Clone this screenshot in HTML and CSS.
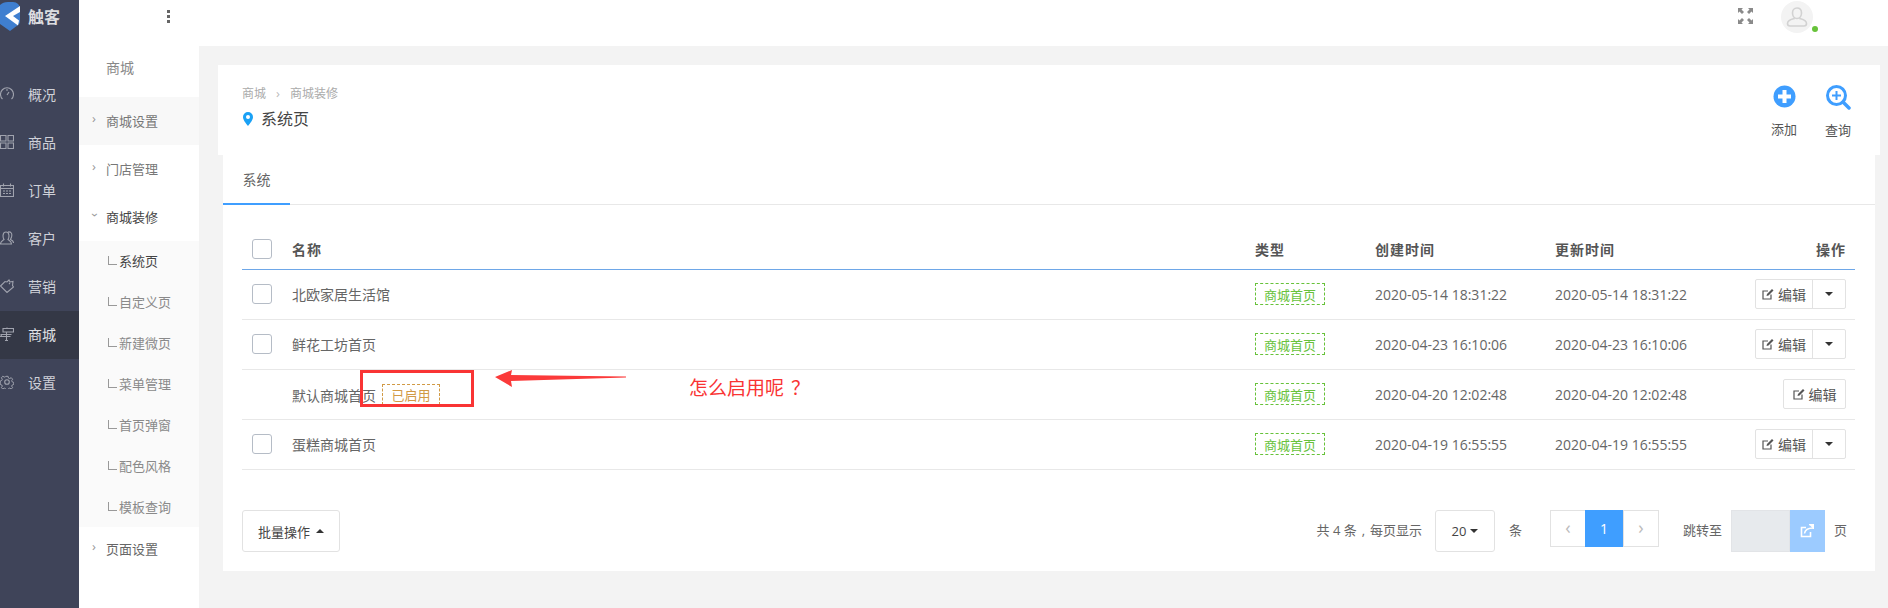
FILE: index.html
```html
<!DOCTYPE html>
<html lang="zh-CN">
<head>
<meta charset="utf-8">
<title>系统页</title>
<link rel="stylesheet" href="styles.css">
</head>
<body>
<div class="app">
  <aside class="rail">
    <div class="logo">
      <svg class="logo-mark" width="20" height="30" viewBox="0 0 20 30"><path d="M0 4Q3 1 8 1h5c4 0 7 3 7 7v12c0 2-1 3-2 4l-8 6-10-7z" fill="#3f7fd0"/><path d="M20 5v6l-7 4 6 4.500-1 5L5 15z" fill="#fff"/></svg>
      <span class="logo-text">触客</span>
    </div>
    <nav class="rail-nav">
      <a class="rail-item"><svg class="ri" viewBox="0 0 14 14"><path d="M2.500 12A6.500 6.500 0 1 1 11.500 12M7 8l2-3M6 3h2"/></svg>概况</a>
      <a class="rail-item"><svg class="ri" viewBox="0 0 14 14"><path d="M.5.5h5.500v5.500H.5zM8 .5h5.500v5.500H8zM.5 8h5.500v5.500H.5zM8 8h5.500v5.500H8z"/></svg>商品</a>
      <a class="rail-item"><svg class="ri" viewBox="0 0 14 14"><path d="M.5 2.500h13v11H.5zM.5 5.500h13M3.500 .5v3M10.500 .5v3M3 8h2M6 8h2M9 8h2M3 10.500h2M6 10.500h2M9 10.500h2"/></svg>订单</a>
      <a class="rail-item"><svg class="ri" viewBox="0 0 14 14"><path d="M.5 13c0-3 2.500-3.500 3.500-4.500C2.500 6 2.500 1 6 1s3.500 5 2 7.500c1 1 3.500 1.500 3.500 4.500zM8 1c3-.5 4.500 1.500 3.500 5l-1 2.500c1 .5 3 1 3 3.500"/></svg>客户</a>
      <a class="rail-item"><svg class="ri" viewBox="0 0 14 14"><path d="M.5 7L5 2.500l2 .5 2-2 1 2 3-.5-.5 4L13.500 8 7 13.500zM9 5l1-1"/></svg>营销</a>
      <a class="rail-item is-active"><svg class="ri" viewBox="0 0 14 14"><path d="M3 1.500h10.500v3.500H3zM.5 7.500h11M2 7.500l-1.500 2h10M7 .5v1M6.500 5v8.500M5 13.500h3"/></svg>商城</a>
      <a class="rail-item"><svg class="ri" viewBox="0 0 14 14"><circle cx="7" cy="7" r="2.300"/><path d="M5.800.7h2.400l.4 1.900 1.400.6 1.700-1 1.500 1.700-1 1.700.6 1.300 1.700.6v2.200l-1.700.6-.6 1.300 1 1.700-1.500 1.500-1.700-1-1.400.6-.4 1.900H5.800l-.4-1.900-1.400-.6-1.700 1-1.500-1.500 1-1.700-.6-1.300-1.700-.6V5.900l1.700-.6.600-1.300-1-1.700L2.300 .6l1.700 1 1.400-.6z" transform="translate(.7 .7) scale(.9)"/></svg>设置</a>
    </nav>
  </aside>

  <aside class="side">
    <div class="side-title">商城</div>
    <a class="side-item is-hover"><span class="chev">›</span>商城设置</a>
    <a class="side-item"><span class="chev">›</span>门店管理</a>
    <a class="side-item is-open"><span class="chev chev-down">›</span>商城装修</a>
    <div class="side-sub">
      <a class="sub-item is-current">系统页</a>
      <a class="sub-item">自定义页</a>
      <a class="sub-item">新建微页</a>
      <a class="sub-item">菜单管理</a>
      <a class="sub-item">首页弹窗</a>
      <a class="sub-item">配色风格</a>
      <a class="sub-item">模板查询</a>
    </div>
    <a class="side-item is-dark"><span class="chev">›</span>页面设置</a>
  </aside>

  <div class="main">
    <header class="topbar">
      <span class="dots"><i></i><i></i><i></i></span>
      <svg class="expand" width="15" height="16" viewBox="0 0 15 16"><path d="M0 0h5L3.500 1.500 6 4 4 6 1.500 3.500 0 5zM15 0h-5l1.500 1.500L9 4l2 2 2.500-2.500L15 5zM0 16h5l-1.500-1.500L6 12l-2-2-2.500 2.500L0 11zM15 16h-5l1.500-1.500L9 12l2-2 2.500 2.500L15 11z" fill="#8a8a8a"/></svg>
      <span class="avatar">
        <svg width="22" height="22" viewBox="0 0 22 22" fill="none" stroke="#d2d2d2" stroke-width="1.600"><path d="M11 2c3 0 4.500 2.200 4.500 5s-1.500 5.500-4.500 5.500S6.500 9.800 6.500 7 8 2 11 2zM8.500 12.500C5 13.500 1.500 14 1.500 17.500c0 1.500.8 2.500 2.500 2.500h14c1.700 0 2.500-1 2.500-2.500 0-3.500-3.500-4-7-5"/></svg>
        <i class="online"></i>
      </span>
    </header>

    <div class="content">
      <section class="page-head">
        <div class="head-left">
          <div class="crumbs"><span>商城</span><span class="crumb-sep">›</span><span>商城装修</span></div>
          <h1 class="page-title">
            <svg width="10" height="14" viewBox="0 0 10 14"><path d="M5 0a5 5 0 0 1 5 5c0 3-3 6.500-5 9-2-2.500-5-6-5-9a5 5 0 0 1 5-5z" fill="#1aa1f5"/><circle cx="5" cy="5" r="2" fill="#fff"/></svg>
            系统页
          </h1>
        </div>
        <div class="head-actions">
          <a class="action">
            <svg width="23" height="23" viewBox="0 0 23 23"><circle cx="11.500" cy="11.500" r="11" fill="#3f9eff"/><path d="M9.500 5h4v4.500H18v4h-4.500V18h-4v-4.500H5v-4h4.500z" fill="#fff"/></svg>
            <span>添加</span>
          </a>
          <a class="action">
            <svg width="25" height="25" viewBox="0 0 25 25" fill="none" stroke="#3f9eff"><circle cx="10.500" cy="10.500" r="9" stroke-width="3"/><path d="M17 17l6 6" stroke-width="3.500" stroke-linecap="round"/><path d="M10.500 6v9M6 10.500h9" stroke-width="2"/></svg>
            <span>查询</span>
          </a>
        </div>
      </section>

      <section class="panel">
        <div class="tabs"><a class="tab is-active">系统</a></div>
        <div class="table-wrap">
          <div class="row row-head">
            <div class="cell-check"><span class="checkbox"></span></div>
            <div>名称</div>
            <div>类型</div>
            <div>创建时间</div>
            <div>更新时间</div>
            <div class="cell-ops">操作</div>
          </div>

          <div class="row">
            <div class="cell-check"><span class="checkbox"></span></div>
            <div>北欧家居生活馆</div>
            <div><span class="tag tag-green">商城首页</span></div>
            <div>2020-05-14 18:31:22</div>
            <div>2020-05-14 18:31:22</div>
            <div class="cell-ops"><span class="btn-group"><a class="btn-edit"><svg class="edit-ico" viewBox="0 0 12 12"><path d="M9 6.500V11H1V3h5" fill="none" stroke="#555" stroke-width="1.200"/><path d="M4.500 8l.5-2 5-5 1.500 1.500-5 5z" fill="#555"/></svg>编辑</a><a class="btn-caret"><i class="caret"></i></a></span></div>
          </div>

          <div class="row">
            <div class="cell-check"><span class="checkbox"></span></div>
            <div>鲜花工坊首页</div>
            <div><span class="tag tag-green">商城首页</span></div>
            <div>2020-04-23 16:10:06</div>
            <div>2020-04-23 16:10:06</div>
            <div class="cell-ops"><span class="btn-group"><a class="btn-edit"><svg class="edit-ico" viewBox="0 0 12 12"><path d="M9 6.500V11H1V3h5" fill="none" stroke="#555" stroke-width="1.200"/><path d="M4.500 8l.5-2 5-5 1.500 1.500-5 5z" fill="#555"/></svg>编辑</a><a class="btn-caret"><i class="caret"></i></a></span></div>
          </div>

          <div class="row">
            <div class="cell-check"></div>
            <div>默认商城首页<span class="tag tag-orange">已启用</span></div>
            <div><span class="tag tag-green">商城首页</span></div>
            <div>2020-04-20 12:02:48</div>
            <div>2020-04-20 12:02:48</div>
            <div class="cell-ops"><span class="btn-group"><a class="btn-edit btn-solo"><svg class="edit-ico" viewBox="0 0 12 12"><path d="M9 6.500V11H1V3h5" fill="none" stroke="#555" stroke-width="1.200"/><path d="M4.500 8l.5-2 5-5 1.500 1.500-5 5z" fill="#555"/></svg>编辑</a></span></div>
          </div>

          <div class="row">
            <div class="cell-check"><span class="checkbox"></span></div>
            <div>蛋糕商城首页</div>
            <div><span class="tag tag-green">商城首页</span></div>
            <div>2020-04-19 16:55:55</div>
            <div>2020-04-19 16:55:55</div>
            <div class="cell-ops"><span class="btn-group"><a class="btn-edit"><svg class="edit-ico" viewBox="0 0 12 12"><path d="M9 6.500V11H1V3h5" fill="none" stroke="#555" stroke-width="1.200"/><path d="M4.500 8l.5-2 5-5 1.500 1.500-5 5z" fill="#555"/></svg>编辑</a><a class="btn-caret"><i class="caret"></i></a></span></div>
          </div>

          <div class="footer">
            <a class="btn-batch">批量操作<i class="caret caret-up"></i></a>
            <div class="pager">
              <span class="pager-total">共 4 条 <span class="punct-comma">,</span> 每页显示</span>
              <a class="page-size">20<i class="caret"></i></a>
              <span class="pager-unit">条</span>
              <div class="pages">
                <a class="page-cell page-prev">‹</a>
                <a class="page-cell page-current">1</a>
                <a class="page-cell page-next">›</a>
              </div>
              <span class="jump-label">跳转至</span>
              <span class="jump-input"></span>
              <a class="jump-btn"><svg width="14" height="14" viewBox="0 0 14 14" fill="none" stroke="#fff" stroke-width="1.600"><path d="M10.500 8v4.500h-9v-9H6"/><path d="M4.500 9.500C5 6 7.500 4 13 4"/><path d="M9 .5h4.500V5" fill="#fff"/></svg></a>
              <span class="jump-unit">页</span>
            </div>
          </div>
        </div>
      </section>
    </div>
  </div>

  <div class="note-box"></div>
  <svg class="note-arrow" width="132" height="18" viewBox="0 0 132 18"><path d="M0 7L17 0l-1 5 115 1.500v1L16 11l1 6z" fill="#fb3a3a"/></svg>
  <div class="note-text">怎么启用呢<span class="punct-question">？</span></div>
</div>
</body>
</html>
```
FILE: styles.css
```css
* { box-sizing: border-box; }
html, body { margin: 0; padding: 0; height: 100%; }
body {
  font-family: "Open Sans", "Noto Sans CJK SC", sans-serif;
  font-size: 14px;
  color: #666;
  background: #f3f3f3;
  overflow: hidden;
}
a { color: inherit; text-decoration: none; }
.punct-comma { margin: 0 1.500px; }
.punct-question { margin-left: 7px; }

.app { position: relative; display: flex; width: 1888px; height: 608px; overflow: hidden; }

/* dark rail */
.rail { flex: 0 0 79px; background: #3f4459; color: #c9ccd4; }
.logo { display: flex; align-items: center; gap: 8px; height: 78px; padding-bottom: 46px; }
.logo-mark { flex: none; }
.logo-text { font-size: 16px; font-weight: 700; color: #dcdde0; }
.rail-nav { display: flex; flex-direction: column; margin-top: -7px; }
.rail-item { display: flex; align-items: center; gap: 14px; height: 48px; padding-bottom: 2px; font-size: 14px; color: #cfd1d8; }
.rail-item.is-active { background: #343846; color: #e0e1e5; }
.ri { flex: none; width: 14px; height: 14px; fill: none; stroke: #a0a3ae; stroke-width: 1.1; }

/* second menu */
.side { flex: 0 0 120px; background: #fff; font-size: 13px; color: #777; height: 608px; padding-top: 46px; }
.side-title { display: flex; align-items: center; height: 51px; padding: 0 0 10px 27px; font-size: 14px; color: #888; }
.side-item { display: flex; align-items: center; height: 48px; padding: 0 0 2px 13px; }
.side-item.is-hover { background: #f8f8f8; }
.side-item.is-open { color: #444; }
.side-item.is-dark { color: #666; height: 46px; padding-bottom: 4px; }
.chev { display: inline-block; width: 14px; font-size: 13px; color: #999; line-height: 1; margin-top: -3px; }
.chev-down { transform: rotate(90deg) translateY(1px); transform-origin: 3px 8px; }
.side-sub { background: #fafafa; height: 286px; }
.sub-item { display: flex; align-items: center; height: 41px; padding: 0 0 3px 40px; position: relative; color: #8a8a8a; }
.sub-item::before { content: ""; position: absolute; left: 29px; top: 15px; width: 8px; height: 8px; border-left: 1px solid #999; border-bottom: 1px solid #999; }
.sub-item.is-current { color: #444; }

/* main */
.main { flex: 1; min-width: 0; display: flex; flex-direction: column; }
.topbar { display: flex; align-items: flex-start; height: 46px; background: #fff; margin-left: -120px; padding-left: 88px; }
.dots { display: flex; flex-direction: column; gap: 2px; margin-top: 10px; }
.dots i { display: block; width: 3px; height: 3px; background: #666; }
.expand { margin-left: 1568px; margin-top: 8px; }
.avatar { position: relative; display: flex; align-items: center; justify-content: center; width: 32px; height: 32px; margin-left: 28px; margin-top: 1px; border-radius: 50%; background: #f3f3f3; }
.online { position: absolute; right: -5px; bottom: 1px; width: 6px; height: 6px; border-radius: 50%; background: #67c23a; }

.content { padding: 19px 8px 0 19px; }
.page-head { display: flex; justify-content: space-between; height: 90px; background: #fff; padding: 19px 29px 0 24px; }
.crumbs { display: flex; align-items: center; gap: 10px; height: 18px; font-size: 12px; color: #aaa; }
.crumb-sep { color: #bbb; font-size: 13px; }
.page-title { display: flex; align-items: center; gap: 8px; margin: 7px 0 0 1px; font-size: 16px; font-weight: 400; color: #444; line-height: 20px; }
.head-actions { display: flex; gap: 28px; }
.action { display: flex; flex-direction: column; align-items: center; width: 26px; height: 70px; font-size: 13px; color: #555; gap: 12px; padding-top: 1px; }
.action:last-child { gap: 11px; }
.action svg { flex: none; }
.action span { white-space: nowrap; line-height: 18px; }

.panel { height: 416px; margin: 0 5px; background: #fff; }
.tabs { display: flex; height: 50px; border-bottom: 1px solid #e8e8e8; }
.tab { display: flex; align-items: center; justify-content: center; width: 67px; height: 50px; color: #666; border-bottom: 2px solid #3f9eff; }
.table-wrap { padding: 25px 20px 0 19px; }

.row { display: grid; grid-template-columns: 50px 963px 120px 180px 150px 1fr; align-items: center; height: 50px; padding-bottom: 1px; border-bottom: 1px solid #e8e8e8; color: #666; }
.row-head { height: 40px; padding-bottom: 1px; border-bottom: 1px solid #6ea7e8; font-weight: 600; color: #555; letter-spacing: 1px; }
.cell-check { padding-left: 10px; display: flex; }
.checkbox { display: block; width: 20px; height: 20px; border: 1px solid #b5bcc6; border-radius: 3px; background: #fff; }
.cell-ops { display: flex; justify-content: flex-end; padding-right: 9px; }

.tag { display: inline-flex; align-items: center; justify-content: center; height: 22px; border: 1px dashed; font-size: 13px; }
.tag-green { width: 70px; border-color: #67c23a; color: #67c23a; }
.tag-orange { width: 58px; height: 21px; margin-left: 6px; border-color: #d19a45; color: #d19a45; vertical-align: 1px; }

.btn-group { display: inline-flex; height: 30px; border: 1px solid #e2e2e2; border-radius: 2px; }
.btn-edit { display: flex; align-items: center; justify-content: center; gap: 4px; width: 56px; color: #555; font-size: 14px; }
.btn-solo { width: 61px; }
.btn-caret { display: flex; align-items: center; justify-content: center; width: 33px; border-left: 1px solid #e2e2e2; }
.edit-ico { width: 12px; height: 12px; flex: none; }
.caret { display: inline-block; width: 0; height: 0; border-left: 4px solid transparent; border-right: 4px solid transparent; border-top: 4px solid #333; }
.caret-up { border-top: 0; border-bottom: 4px solid #333; margin-left: 6px; }

.footer { display: flex; justify-content: space-between; margin-top: 40px; padding-right: 8px; }
.btn-batch { display: flex; align-items: center; justify-content: center; width: 98px; height: 42px; border: 1px solid #e2e2e2; border-radius: 3px; color: #444; font-size: 13px; }
.pager { display: flex; align-items: flex-start; height: 42px; font-size: 13px; color: #666; line-height: 40px; }
.pager-total { white-space: nowrap; }
.page-size { display: flex; align-items: center; justify-content: center; gap: 4px; width: 60px; height: 42px; margin-left: 13px; border: 1px solid #e2e2e2; border-radius: 3px; color: #444; }
.pager-unit { margin-left: 14px; }
.pages { display: flex; height: 37px; margin-left: 28px; border: 1px solid #e2e2e2; }
.page-cell { display: flex; align-items: center; justify-content: center; height: 35px; font-size: 18px; color: #bbb; }
.page-prev { width: 34px; padding-bottom: 3px; }
.page-next { width: 35px; padding-bottom: 3px; border-left: 1px solid #e2e2e2; }
.page-current { width: 38px; height: 37px; margin: -1px 0; background: #3f9eff; color: #fff; font-size: 14px; }
.jump-label { margin-left: 24px; }
.jump-input { width: 59px; height: 42px; margin-left: 9px; background: #e7eaed; border: 1px solid #e2e4e7; }
.jump-btn { display: flex; align-items: center; justify-content: center; width: 35px; height: 42px; background: #9ccbff; }
.jump-unit { margin-left: 9px; }

/* hand-drawn annotation over the screenshot */
.note-box { position: absolute; left: 360px; top: 370px; width: 114px; height: 37px; border: 3px solid #f93434; }
.note-arrow { position: absolute; left: 495px; top: 370px; }
.note-text { position: absolute; left: 689px; top: 374px; font-size: 19px; line-height: 28px; color: #f93434; }
```
